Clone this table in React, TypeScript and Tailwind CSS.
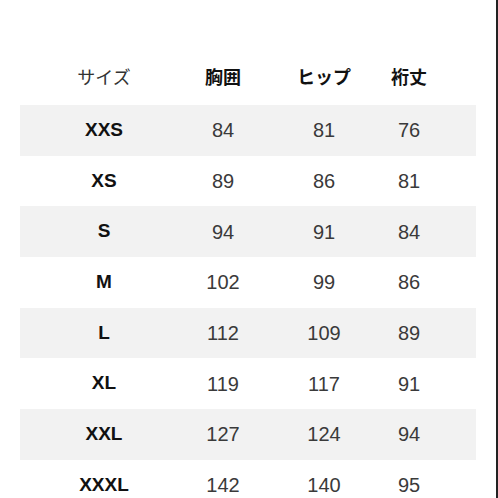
const rows = [
  ["XXS", "84", "81", "76"],
  ["XS", "89", "86", "81"],
  ["S", "94", "91", "84"],
  ["M", "102", "99", "86"],
  ["L", "112", "109", "89"],
  ["XL", "119", "117", "91"],
  ["XXL", "127", "124", "94"],
  ["XXXL", "142", "140", "95"],
];

const cols = "grid grid-cols-[168px_70px_132px_38px_1fr] items-center justify-items-center";

export default function App() {
  return (
    <div
      className="flex h-[498px] w-[498px] overflow-hidden bg-white"
      style={{ fontFamily: '"Liberation Sans", "Noto Sans CJK JP", sans-serif' }}
    >
      <div className="w-[496px] pt-[52px]">
        <div className={`${cols} mx-[20px] h-[53px] text-[18px] text-[#111]`}>
          <span className="font-normal text-[#333]">サイズ</span>
          <span className="font-bold">胸囲</span>
          <span className="font-bold">ヒップ</span>
          <span className="font-bold">裄丈</span>
        </div>
        {rows.map((r, i) => (
          <div
            key={r[0]}
            className={`${cols} mx-[20px] h-[50.67px] ${i % 2 === 0 ? "bg-[#f2f2f2]" : ""}`}
          >
            <span className="text-[19px] font-bold text-[#111]">{r[0]}</span>
            <span className="text-[20px] text-[#3a3a3a]">{r[1]}</span>
            <span className="text-[20px] text-[#3a3a3a]">{r[2]}</span>
            <span className="text-[20px] text-[#3a3a3a]">{r[3]}</span>
          </div>
        ))}
      </div>
      <div className="w-[2px] shrink-0 bg-[#222]" />
    </div>
  );
}
